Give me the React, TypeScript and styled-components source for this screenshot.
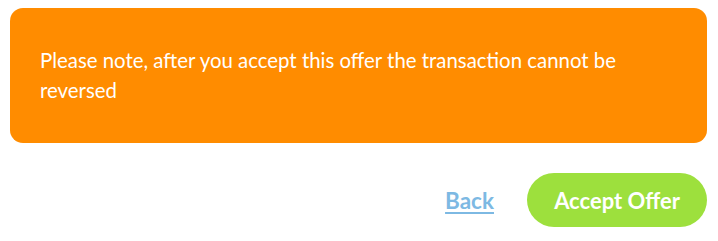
import React from "react";
import styled, { createGlobalStyle } from "styled-components";

const GlobalStyle = createGlobalStyle`
  html, body { margin: 0; padding: 0; background: #ffffff; }
  body { font-family: Lato, "Noto Sans", sans-serif; }
`;

const Page = styled.div`
  padding: 8px 11px 0 10px;
  display: flex;
  flex-direction: column;
  gap: 30px;
`;

const Notice = styled.div`
  background: #ff8c00;
  border-radius: 13px;
  padding: 37px 30px 38px 30px;
  color: #ffffff;
  font-size: 20.4px;
  line-height: 30px;
`;

const Actions = styled.div`
  display: flex;
  justify-content: flex-end;
  align-items: center;
  gap: 33px;
`;

const BackLink = styled.a`
  color: #7db9e3;
  font-weight: 700;
  font-size: 22.5px;
  text-decoration: underline;
  text-decoration-thickness: 2px;
  text-underline-offset: 3px;
  cursor: pointer;
`;

const AcceptButton = styled.button`
  background: #9de03d;
  color: #ffffff;
  border: none;
  border-radius: 27px;
  height: 54px;
  width: 180px;
  padding: 0;
  font-family: Lato, "Noto Sans", sans-serif;
  font-weight: 700;
  font-size: 22px;
  cursor: pointer;
`;

export default function App() {
  return (
    <>
      <GlobalStyle />
      <Page>
        <Notice>
          Please note, after you accept this offer the transaction cannot be reversed
        </Notice>
        <Actions>
          <BackLink>Back</BackLink>
          <AcceptButton>Accept Offer</AcceptButton>
        </Actions>
      </Page>
    </>
  );
}
